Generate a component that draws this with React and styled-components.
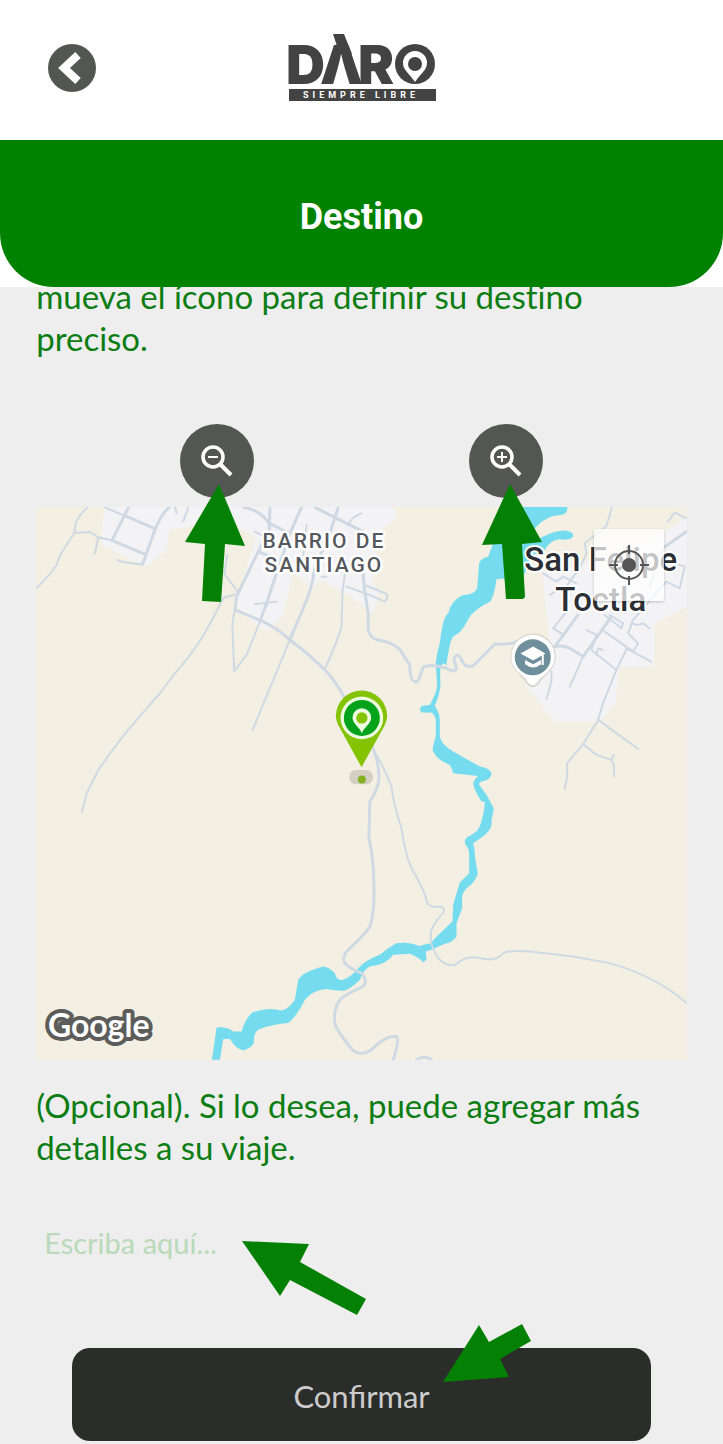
import React from "react";
import styled, { createGlobalStyle } from "styled-components";

const GlobalStyle = createGlobalStyle`
  * { box-sizing: border-box; }
  body {
    margin: 0;
    background: #eeeeee;
    font-family: Lato, "Open Sans", sans-serif;
    font-variant-ligatures: none;
  }
`;

const Page = styled.main`
  display: flex;
  flex-direction: column;
  background: #eeeeee;
`;

const TopBar = styled.header`
  display: grid;
  grid-template-columns: 1fr auto 1fr;
  align-items: center;
  height: 140px;
  padding: 0 48px 4px;
  background: #ffffff;
`;

const BackButton = styled.button`
  display: block;
  width: 48px;
  height: 48px;
  padding: 0;
  border: 0;
  border-radius: 50%;
  background: #545653;
  cursor: pointer;

  svg { display: block; }
`;

const LogoDrawing = styled.svg`
  display: block;
  overflow: visible;
`;

const BannerBackdrop = styled.div`
  position: relative;
  z-index: 1;
  background: #ffffff;
`;

const Banner = styled.div`
  display: flex;
  align-items: center;
  justify-content: center;
  height: 147px;
  padding-top: 6px;
  border-radius: 0 0 54px 54px;
  background: #008200;
`;

const Title = styled.h1`
  margin: 0;
  color: #ffffff;
  font: bold 36px/42px Roboto, sans-serif;
`;

const Content = styled.div`
  display: flex;
  flex-direction: column;
  margin-top: -12px;
  padding: 0 5% 3px;
`;

const Message = styled.p`
  margin: 0;
  color: #0b7d12;
  font-size: 33px;
  line-height: 42px;
`;

const FieldLabel = styled.label`
  margin-top: 24px;
  color: #0b7d12;
  font-size: 33px;
  line-height: 42px;
`;

const ZoomRow = styled.div`
  display: flex;
  justify-content: space-around;
  width: 89%;
  margin: 65px auto 9px;
`;

const Anchor = styled.div`
  position: relative;
`;

const RoundButton = styled.button`
  display: flex;
  align-items: center;
  justify-content: center;
  width: 74px;
  height: 74px;
  padding: 0;
  border: 0;
  border-radius: 50%;
  background: #545653;
  cursor: pointer;
`;

const Pointer = styled.svg`
  position: absolute;
  z-index: 2;
  top: ${(p) => p.$top}px;
  left: ${(p) => p.$left};
  fill: #048004;
  pointer-events: none;
`;

const MapFrame = styled.section`
  position: relative;
`;

const MapDrawing = styled.svg`
  display: block;
  width: 100%;
  height: auto;
  background: #f3f0e3;
`;

const LocateButton = styled.button`
  position: absolute;
  top: 22px;
  right: 23px;
  display: flex;
  align-items: center;
  justify-content: center;
  width: 70px;
  height: 72px;
  padding: 0;
  border: 0;
  border-radius: 2px;
  background: rgba(255, 255, 255, 0.72);
  box-shadow: 0 1px 3px rgba(0, 0, 0, 0.2);
  cursor: pointer;
`;

const DetailInput = styled.input`
  display: block;
  width: 100%;
  height: 60px;
  padding: 0 8px;
  border: 0;
  outline: 0;
  background: transparent;
  color: #0b7d12;
  font: 29px/42px Lato, sans-serif;

  &::placeholder {
    color: #b9d9b9;
    opacity: 1;
  }
`;

const FieldBox = styled.div`
  position: relative;
  margin-top: 45px;
`;

const SubmitBox = styled.div`
  position: relative;
  width: 89%;
  margin: 75px auto 0;
`;

const SubmitButton = styled.button`
  display: block;
  width: 100%;
  height: 93px;
  padding: 4px 0 0;
  border: 0;
  border-radius: 18px;
  background: #2b2d2a;
  color: #cccccc;
  font: 31px/42px Lato, sans-serif;
  cursor: pointer;
`;

function Logo() {
  return (
    <LogoDrawing width="148" height="68" viewBox="0 0 148 68" role="img" aria-label="DARO siempre libre">
      <text y="50" fill="#434343" fontFamily="Inter, sans-serif" fontWeight="900" fontSize="54">
        <tspan x="-2">D</tspan>
        <tspan x="32">Λ</tspan>
        <tspan x="70">R</tspan>
      </text>
      <path d="M45 0H56L64 20H51L48 9Z" fill="#434343" />
      <circle cx="127" cy="30" r="20" fill="#434343" />
      <path d="M127 48C121 39 115 36 115 29A12 12 0 0 1 139 29C139 36 133 39 127 48Z" fill="#fff" />
      <circle cx="127" cy="30" r="7" fill="#434343" />
      <rect x="1" y="55" width="147" height="12" fill="#434343" />
      <text x="15" y="64" fill="#fff" fontFamily="Roboto, sans-serif" fontWeight="700" fontSize="9" letterSpacing="4">
        SIEMPRE LIBRE
      </text>
    </LogoDrawing>
  );
}

function ZoomIcon({ plus }) {
  return (
    <svg width="34" height="34" viewBox="0 0 34 34" fill="none" stroke="#fff">
      <circle cx="13" cy="13" r="10" strokeWidth="3.500" />
      <path d="M20 20L31 31" strokeWidth="4" />
      <path d={plus ? "M8 13H18M13 8V18" : "M8 13H18"} strokeWidth="2" />
    </svg>
  );
}

function TerritoryMap() {
  return (
    <MapDrawing viewBox="0 0 1953 1659" role="img" aria-label="Mapa del destino">
      <g fill="#f3f2f5">
        <path d="M205 0H1060Q1120 20 1030 70L1010 230Q1040 260 1010 320L950 270L850 220L830 240L770 200L740 330L690 370L620 320L600 290L660 90L560 40L400 70L390 130L330 180L190 110Z" />
        <path d="M1953 30L1880 80L1700 150L1520 200L1540 400L1470 540L1560 645H1690L1740 590L1750 480H1855V350L1953 300Z" />
      </g>
      <g fill="#f3f0e3">
        <path d="M0 0H205L195 120L100 130L0 90Z" />
        <path d="M1125 0H1290V120L1120 210Z" />
      </g>

      <g fill="#74dcee">
        <path transform="translate(1152 -21)" d="M300 20H442Q446 44 420 45Q378 48 350 80L330 100L345 125Q400 88 440 92Q462 95 460 110Q450 122 420 118Q390 120 375 150L340 165L310 230L230 238Q225 280 212 305Q160 330 145 358Q125 400 100 410Q90 425 88 445L80 490Q85 500 70 490L62 500Q60 520 62 560Q58 590 45 618Q60 640 60 660V710Q65 735 100 755L180 800Q215 805 215 825Q210 840 185 845Q175 848 178 860L210 905H185Q160 865 160 850Q165 835 175 828L100 820Q95 800 90 795Q50 780 38 750Q40 735 48 710V660Q45 645 35 638H5Q-3 628 5 618L30 615Q50 580 52 560L48 490Q50 460 60 430Q62 400 70 370Q75 350 85 340Q95 300 130 285Q165 285 172 265Q175 230 178 190Q182 175 205 170L220 130Z" />
        <path transform="translate(1152 669)" d="M160 155L178 165L200 195L222 235Q218 260 215 268Q218 290 205 305Q195 318 160 340Q166 360 166 385L174 432Q165 455 155 463Q130 480 127 500V535L110 580V620Q95 640 75 642L38 658L0 668V648L32 640Q50 620 98 575L100 525L120 458L148 430V375Q148 355 137 345Q130 330 145 320Q170 310 180 290Q195 245 195 215Z" />
        <path transform="translate(462 819)" d="M735 488L690 500Q660 485 620 490Q600 500 570 525Q530 540 510 560Q480 595 460 600Q440 605 435 580Q415 560 400 560Q340 575 325 600L315 660Q295 690 275 692Q230 680 185 700Q165 720 155 755H130Q110 740 80 743L66 840H90L100 778H120Q140 810 160 812Q185 805 192 790Q190 760 205 750Q240 735 295 730Q320 710 345 660Q370 630 410 628Q450 635 465 632Q485 625 510 600Q520 570 540 560Q590 555 610 525L660 522Q690 535 700 547L710 540L708 515L735 505Z" />
      </g>

      <g fill="none" stroke="#cfd9e3" strokeWidth="6" strokeLinecap="round" strokeLinejoin="round">
        <g transform="translate(-18 -21)">
          <path d="M172 22Q140 55 137 70L133 99L100 150Q85 175 80 195L60 222L20 264M133 99L180 96L205 112L195 160M205 112L245 121M224 22L286 48M435 22L440 40M475 22L460 64M592 165L583 222L628 280L580 294Q545 365 515 415Q480 470 435 520L390 580L290 695Q220 785 200 820L170 880L156 936" />
          <path d="M262 180Q285 190 338 193" />
          <path d="M296 22L246 121L346 163M286 48L376 87M418 22Q395 40 376 87L338 193" strokeWidth="9" />
        </g>
        <g transform="translate(582 -21)">
          <path d="M15 330Q5 370 8 400L13 514L50 465L90 365M75 95L115 115M230 75L220 165M355 75Q365 50 395 40M345 225L338 270L335 380Q320 430 285 508M350 260L420 285L465 305Q480 285 465 280L405 255M75 313L140 305M115 298L110 315M275 230H290M180 420L68 690" />
          <path d="M120 22L118 90L85 155L20 290L15 330L100 365Q150 390 180 420Q235 460 285 510Q315 540 345 595M42 22Q90 30 118 70L180 100M215 22L180 100L110 310L90 365M325 22L290 130Q250 200 250 235Q240 285 205 360L180 420M255 22L400 95M85 155L115 168M400 220L403 265L415 340V390Q420 415 445 420Q505 430 520 465L540 495Q540 540 555 545Q565 550 572 525L580 502Q600 490 650 505Q675 520 680 505L672 475Q685 455 695 480Q705 505 730 498L795 432Q840 435 860 425" strokeWidth="9" />
        </g>
        <g transform="translate(1152 -21)">
          <path d="M577 20L560 78L495 130L500 160L485 195L440 260M370 220L410 245L430 230L470 250M390 285L430 260M800 95L730 145L690 260M745 65L765 38L800 55M730 180L795 200L780 265L740 245L640 360L625 400L655 430L640 455L555 395M635 370L655 375L670 370L690 385M555 345L605 385L610 370L570 345M620 445L695 485M440 335L400 385L425 400M500 390L530 405L515 450L590 510M530 465L535 445L550 450M490 470L450 560M395 515L395 545L380 598M622 445L590 510L550 610L535 660L490 733L442 790V830L435 868M535 660L655 747M490 733L530 765L575 780L583 795V830M575 780L582 765" />
          <path d="M575 350L490 470L450 445Q430 435 405 440L475 345M800 95L735 140" strokeWidth="9" />
        </g>
        <g transform="translate(462 819)">
          <path d="M560 -75Q590 -20 605 20Q610 70 635 145Q645 220 665 265Q705 330 712 370Q725 385 750 380Q768 385 760 400Q740 420 725 450Q715 500 750 540Q785 570 810 545Q840 525 880 537Q920 545 940 520Q960 510 1020 515L1150 530L1260 550Q1400 590 1491 670" />
          <path d="M535 -125Q570 -60 567 0Q563 30 540 65L537 175Q552 240 552 310Q555 400 540 440Q525 465 475 510Q455 530 465 550Q485 570 515 580Q535 605 520 620Q465 645 450 660Q425 700 438 740Q460 780 490 812Q515 830 545 810Q590 765 620 770Q630 780 610 840M680 840Q705 825 725 840" strokeWidth="9" />
        </g>
      </g>

      <g transform="translate(1152 -21)">
        <path d="M339 562Q325 562 315 542L290 515A68 68 0 1 1 390 515L363 542Q353 562 339 562Z" fill="#d5d3cf" />
        <path d="M339 556Q328 556 318 537L293 515A65 65 0 1 1 386 515L360 537Q350 556 339 556Z" fill="#fff" />
        <circle cx="339" cy="472" r="54" fill="#6f8f9c" />
        <path d="M302 461L340 440L377 461L340 482Z M316 480L340 493L364 480V493Q340 512 316 493Z M366 463H372V495H366Z" fill="#fff" />
      </g>

      <g fontFamily="Roboto, sans-serif" fontWeight="500" textAnchor="middle" stroke="#fff" strokeLinejoin="round" paintOrder="stroke">
        <g fill="#55595e" fontSize="63" letterSpacing="6" strokeWidth="15">
          <text x="864" y="123">BARRIO DE</text>
          <text x="864" y="196">SANTIAGO</text>
        </g>
        <g fill="#2b2e34" fontSize="99" strokeWidth="12">
          <text x="1695" y="192">San Felipe</text>
          <text x="1695" y="311">Toctla</text>
        </g>
      </g>

      <g transform="translate(582 -21)">
        <rect x="358" y="810" width="72" height="43" rx="21" fill="#d3cfc3" />
        <circle cx="396" cy="839" r="12" fill="#84b020" />
        <path d="M395 802L325 675Q318 660 318 649A77 77 0 0 1 472 649Q472 660 465 675Z" fill="#84c300" />
        <circle cx="396" cy="654" r="64" fill="#eefbe0" />
        <circle cx="396" cy="654" r="54" fill="#04a31b" />
        <path d="M396 700C388 680 368 672 368 653A28 28 0 0 1 424 653C424 672 404 680 396 700Z" fill="#eefbe0" />
        <circle cx="396" cy="654" r="17" fill="#84c300" />
      </g>

      <text x="36" y="1591" fill="#fff" stroke="#5c5c5a" strokeWidth="24" strokeLinejoin="round" paintOrder="stroke" fontFamily="Lato, sans-serif" fontWeight="700" fontSize="96">
        Google
      </text>
    </MapDrawing>
  );
}

export default function App() {
  return (
    <>
      <GlobalStyle />
      <Page>
        <TopBar>
          <BackButton type="button" aria-label="Volver">
            <svg width="48" height="48" viewBox="0 0 48 48" fill="none" stroke="#fff" strokeWidth="8">
              <path d="M30 11L16 24L30 37" strokeLinejoin="miter" strokeLinecap="butt" />
            </svg>
          </BackButton>
          <Logo />
        </TopBar>
        <BannerBackdrop>
          <Banner>
            <Title>Destino</Title>
          </Banner>
        </BannerBackdrop>
        <Content>
          <Message>
            mueva el ícono para definir su destino preciso.
          </Message>
          <ZoomRow>
            <Anchor>
              <RoundButton type="button" aria-label="Alejar">
                <ZoomIcon />
              </RoundButton>
              <Pointer $top={60} $left="5px" width="60" height="118" viewBox="0 0 60 118">
                <path d="M34 0L60 62L40 60L36 118L17 117L20 60L0 58Z" />
              </Pointer>
            </Anchor>
            <Anchor>
              <RoundButton type="button" aria-label="Acercar">
                <ZoomIcon plus />
              </RoundButton>
              <Pointer $top={60} $left="13px" width="60" height="115" viewBox="0 0 60 115">
                <path d="M28 0L60 58L40 60L43 113L41 115H24L20 60L0 61Z" />
              </Pointer>
            </Anchor>
          </ZoomRow>
          <MapFrame>
            <TerritoryMap />
            <LocateButton type="button" aria-label="Mi ubicación">
              <svg width="40" height="40" viewBox="0 0 40 40" fill="none" stroke="#555" strokeWidth="2">
                <circle cx="20" cy="20" r="14" />
                <circle cx="20" cy="20" r="7" fill="#555" stroke="none" />
                <path d="M20 0V9M20 31V40M0 20H9M31 20H40" />
              </svg>
            </LocateButton>
          </MapFrame>
          <FieldLabel htmlFor="detalles">
            (Opcional). Si lo desea, puede agregar más detalles a su viaje.
          </FieldLabel>
          <FieldBox>
            <DetailInput id="detalles" type="text" placeholder="Escriba aquí..." />
            <Pointer $top={28} $left="206px" width="124" height="74" viewBox="0 0 124 74">
              <path d="M0 0L67 3L58 21L124 58L115 74L48 39L38 55Z" />
            </Pointer>
          </FieldBox>
          <SubmitBox>
            <SubmitButton type="button">Confirmar</SubmitButton>
            <Pointer $top={-24} $left="64%" width="88" height="58" viewBox="0 0 88 58">
              <path d="M0 58L36 1L46 18L79 0L88 17L57 35L66 53Z" />
            </Pointer>
          </SubmitBox>
        </Content>
      </Page>
    </>
  );
}
